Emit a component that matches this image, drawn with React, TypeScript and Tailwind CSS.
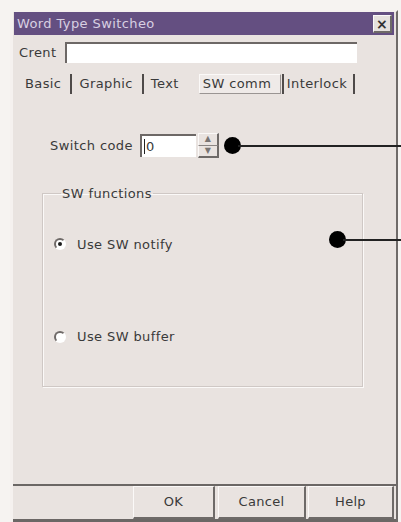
import React from "react";

const SANS = "font-['DejaVu_Sans',sans-serif]";

function Radio({ checked, label }: { checked?: boolean; label: string }) {
  return (
    <div className="flex items-center gap-[11px]">
      <span className="w-[12px] h-[12px] rounded-full border-2 border-[#6f6a68] border-r-white border-b-white bg-white flex items-center justify-center">
        {checked && <span className="w-[4px] h-[4px] rounded-full bg-[#1c1c1c]" />}
      </span>
      <span>{label}</span>
    </div>
  );
}

function PushButton({ label, w }: { label: string; w: string }) {
  return (
    <button
      className={`${w} h-[33px] bg-[#e9e3e0] border-l border-t border-[#fbf9f8] border-r-2 border-b-2 border-r-[#6e6a68] border-b-[#6e6a68] text-[13px] tracking-[0.3px] text-[#3a3a3a]`}
    >
      {label}
    </button>
  );
}

const Sep = ({ className = "" }: { className?: string }) => (
  <span className={`w-[2px] h-[20px] bg-[#4e4a49] ${className}`} />
);

export default function App() {
  return (
    <div className={`${SANS} relative w-[401px] h-[522px] overflow-hidden bg-[#f6f3f1] pt-[10px] pl-[10px] text-[13px] tracking-[0.4px] text-[#3a3a3a]`}>
      {/* dialog window */}
      <div className="w-[388px] h-[512px] flex flex-col bg-[#e9e3e0] border-t-2 border-l-[3px] border-[#f5f1ef] border-r-2 border-r-[#6f6b69]">
        {/* caption */}
        <div className="h-[23px] ml-[1px] mr-[2px] bg-[#644f81] flex items-center justify-between pl-[3px] pr-[2px] pt-[1px]">
          <span className="text-[#d8cfe2]">Word Type Switcheo</span>
          <span className="w-[19px] h-[18px] bg-[#e6e1de] border-l border-t border-[#fbf9f8] border-r-2 border-b-2 border-r-[#6e6a68] border-b-[#6e6a68] flex items-center justify-center text-[14px] font-bold leading-none text-[#333]">
            ×
          </span>
        </div>

        {/* comment row */}
        <div className="h-[31px] flex items-start pt-[7px] pl-[6px]">
          <span className="w-[46px] leading-[21px]">Crent</span>
          <div className="w-[292px] h-[21px] bg-white border-t-2 border-l-2 border-[#6d6866]" />
        </div>

        {/* tabs */}
        <div className="h-[30px] flex items-center pl-[12px] pt-[5px]">
          <span>Basic</span>
          <Sep className="ml-[9px] mr-[7px]" />
          <span>Graphic</span>
          <Sep className="ml-[9px] mr-[7px]" />
          <span>Text</span>
          <span className="ml-[20px] w-[82px] h-[20px] flex items-center pl-[3px] bg-[#efeae8] border border-[#9a9593] border-t-[#fbf9f8] border-l-[#fbf9f8]">
            SW comm
          </span>
          <Sep className="ml-[1px] mr-[3px]" />
          <span>Interlock</span>
          <Sep className="ml-[6px]" />
        </div>

        {/* tab page */}
        <div className="flex-1 flex flex-col pl-[29px] pt-[37px]">
          <div className="flex items-center ml-[8px]">
            <span className="w-[90px]">Switch code</span>
            <div className="w-[56px] h-[23px] bg-white border-t-2 border-l-2 border-[#6d6866] flex items-center pl-[2px]">
              <span className="border-l border-[#222] pl-[1px] leading-[15px]">0</span>
            </div>
            <div className="ml-[2px] w-[21px] h-[25px] flex flex-col">
              <span className="flex-1 flex items-center justify-center text-[8px] leading-none text-[#7a7573] border-l border-t border-[#fbf9f8] border-r-2 border-b border-r-[#6e6a68] border-b-[#8a8583]">
                ▲
              </span>
              <span className="flex-1 flex items-center justify-center text-[8px] leading-none text-[#7a7573] border-l border-[#fbf9f8] border-r-2 border-b-2 border-r-[#6e6a68] border-b-[#6e6a68]">
                ▼
              </span>
            </div>
          </div>

          <fieldset className="mt-[26px] w-[321px] h-[203px] border border-[#cfc8c5] shadow-[inset_1px_1px_0_#fbf9f8,1px_1px_0_#fbf9f8] pl-[11px]">
            <legend className="ml-[7px] px-[1px]">SW functions</legend>
            <div className="pt-[31px] flex flex-col gap-[73px]">
              <Radio checked label="Use SW notify" />
              <Radio label="Use SW buffer" />
            </div>
          </fieldset>
        </div>

        {/* button strip */}
        <div className="h-[38px] border-t-2 border-[#6b6765] border-b-[3px] border-b-[#6b6765] flex items-start justify-end pr-[2px]">
          <PushButton label="OK" w="w-[82px]" />
          <PushButton label="Cancel" w="w-[88px] ml-[3px]" />
          <PushButton label="Help" w="w-[86px] ml-[2px]" />
        </div>
      </div>

      {/* callout markers */}
      <span className="absolute left-[224px] top-[137px] w-[17px] h-[17px] rounded-full bg-black" />
      <span className="absolute left-[238px] top-[145px] w-[163px] h-[2px] bg-[#222]" />
      <span className="absolute left-[329px] top-[231px] w-[17px] h-[17px] rounded-full bg-black" />
      <span className="absolute left-[343px] top-[239px] w-[58px] h-[2px] bg-[#222]" />
    </div>
  );
}
